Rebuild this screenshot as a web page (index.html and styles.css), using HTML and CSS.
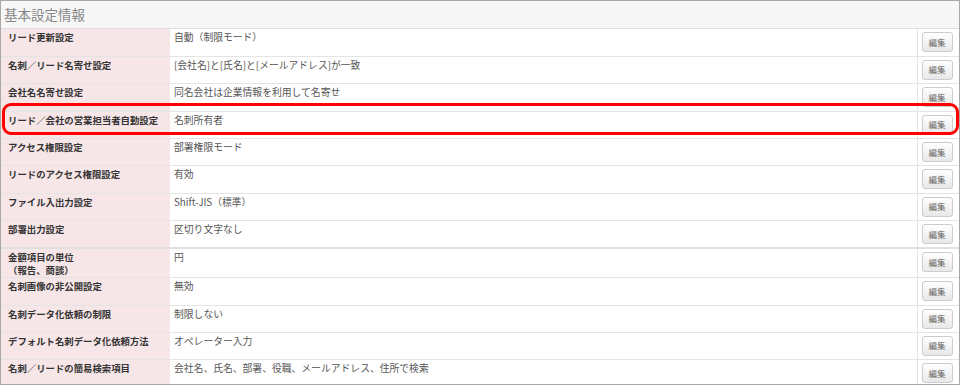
FILE: index.html
```html
<!DOCTYPE html>
<html lang="ja">
<head>
	<meta charset="UTF-8">
	<title>基本設定情報</title>
	<link rel="stylesheet" href="styles.css">
</head>
<body>
<div class="panel">
	<div class="panel-head">基本設定情報</div>
	<table class="setting">
		<tr><th>リード更新設定</th><td>自動（制限モード）</td><td class="op"><button>編集</button></td></tr>
		<tr><th>名刺／リード名寄せ設定</th><td>[会社名]と[氏名]と[メールアドレス]が一致</td><td class="op"><button>編集</button></td></tr>
		<tr><th>会社名名寄せ設定</th><td>同名会社は企業情報を利用して名寄せ</td><td class="op"><button>編集</button></td></tr>
		<tr><th>リード／会社の営業担当者自動設定</th><td>名刺所有者</td><td class="op"><button>編集</button></td></tr>
		<tr><th>アクセス権限設定</th><td>部署権限モード</td><td class="op"><button>編集</button></td></tr>
		<tr><th>リードのアクセス権限設定</th><td>有効</td><td class="op"><button>編集</button></td></tr>
		<tr><th>ファイル入出力設定</th><td>Shift-JIS（標準）</td><td class="op"><button>編集</button></td></tr>
		<tr class="sep"><th>部署出力設定</th><td>区切り文字なし</td><td class="op"><button>編集</button></td></tr>
		<tr class="tall"><th>金額項目の単位<br>（報告、商談）</th><td>円</td><td class="op"><button>編集</button></td></tr>
		<tr><th>名刺画像の非公開設定</th><td>無効</td><td class="op"><button>編集</button></td></tr>
		<tr><th>名刺データ化依頼の制限</th><td>制限しない</td><td class="op"><button>編集</button></td></tr>
		<tr><th>デフォルト名刺データ化依頼方法</th><td>オペレーター入力</td><td class="op"><button>編集</button></td></tr>
		<tr><th>名刺／リードの簡易検索項目</th><td>会社名、氏名、部署、役職、メールアドレス、住所で検索</td><td class="op"><button>編集</button></td></tr>
	</table>
	<div class="mark"></div>
</div>
</body>
</html>
```

FILE: styles.css
```css
*{margin: 0;padding: 0;box-sizing: border-box;}
body{
	background:#fff;
	font-family:"Noto Sans CJK JP","Liberation Sans",sans-serif;
	font-size:9.8px;
	color:#555;
}
.panel{
	width:960px;
	height:385px;
	border:1px solid #a8a8a8;
	position:relative;
	overflow:hidden;
}
.panel-head{
	height:28px;
	padding:3px 0 0 3px;
	background:#f7f7f7;
	border-bottom:1px solid #ddd;
	font-size:13.5px;
	color:#888;
	line-height:20px;
}
.setting{
	width:100%;
	border-collapse:collapse;
	table-layout:fixed;
}
.setting tr{
	border-bottom:1px solid #e4e4e4;
}
.setting tr.sep{
	border-bottom:2px solid #e0e0e0;
}
.setting th{
	width:169px;
	height:27.4px;
	background:#f7e6e8;
	text-align:left;
	vertical-align:top;
	padding:2px 0 0 7px;
	font-size:9.4px;
	font-weight:bold;
	color:#333;
	line-height:13px;
}
.setting tr.tall th{
	height:29.5px;
}
.setting td{
	vertical-align:top;
	padding:2px 0 0 4px;
	line-height:13px;
}
.setting td.op{
	width:42px;
	border-left:1px solid #e4e4e4;
	padding:3px 0 0 4px;
}
.op button{
	display:block;
	width:31px;
	height:20px;
	border:1px solid #ccc;
	border-radius:3px;
	background:linear-gradient(#fff,#e8e8e8);
	font-family:"Noto Sans CJK JP",sans-serif;
	font-size:8.5px;
	line-height:15px;
	color:#666;
}
.mark{
	position:absolute;
	left:1px;
	top:102px;
	width:957px;
	height:32px;
	border:3px solid #f00;
	border-radius:9px;
}
```
